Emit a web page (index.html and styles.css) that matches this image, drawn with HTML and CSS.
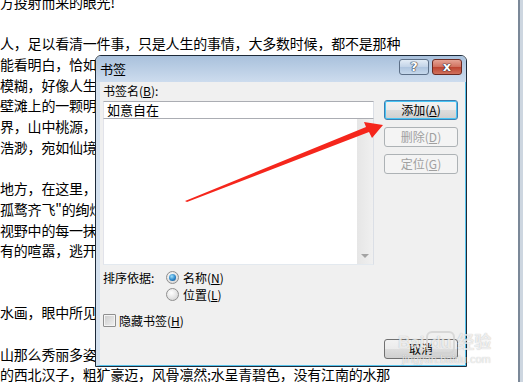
FILE: index.html
```html
<!DOCTYPE html>
<html lang="zh-CN">
<head>
    <meta charset="UTF-8">
    <title>书签</title>
    <link rel="stylesheet" href="styles.css">
</head>
<body>
    <div class="doc">
        <p>方投射而来的眼光!</p>
        <p></p>
        <p>人，足以看清一件事，只是人生的事情，大多数时候，都不是那种</p>
        <p class="under">能看明白，恰如我</p>
        <p class="under">模糊，好像人生中</p>
        <p class="under">壁滩上的一颗明珠</p>
        <p class="under">界，山中桃源，江</p>
        <p class="under">浩渺，宛如仙境</p>
        <p></p>
        <p class="under">地方，在这里，可</p>
        <p class="under">孤鹜齐飞"的绚烂</p>
        <p class="under">视野中的每一抹</p>
        <p class="under">有的喧嚣，逃开城</p>
        <p></p>
        <p></p>
        <p class="under">水画，眼中所见皆</p>
        <p></p>
        <p class="under">山那么秀丽多姿</p>
        <p>的西北汉子，粗犷豪迈，风骨凛然;水呈青碧色，没有江南的水那</p>
    </div>
    <div class="edge"></div>

    <div class="dialog">
        <div class="titlebar">
            <span class="title">书签</span>
            <span class="cap-btn help">?</span>
            <span class="cap-btn close">x</span>
        </div>
        <div class="dialog-body">
            <div class="left-col">
                <div class="label">书签名(<u>B</u>):</div>
                <div class="name-input">如意自在</div>
                <div class="listbox">
                    <div class="scrollbar">
                        <span class="arrow-down"></span>
                    </div>
                </div>
                <div class="sort-row">
                    <span class="label">排序依据:</span>
                    <div class="radios">
                        <div class="option"><span class="radio checked"></span>名称(<u>N</u>)</div>
                        <div class="option"><span class="radio"></span>位置(<u>L</u>)</div>
                    </div>
                </div>
                <div class="option hide-row"><span class="checkbox"></span>隐藏书签(<u>H</u>)</div>
            </div>
            <div class="right-col">
                <div class="btn default">添加(<u>A</u>)</div>
                <div class="btn disabled">删除(<u>D</u>)</div>
                <div class="btn disabled">定位(<u>G</u>)</div>
                <div class="btn cancel">取消</div>
            </div>
        </div>
    </div>

    <div class="watermark">
        <div class="wm-logo">Bai<span class="wm-du">du</span>经验</div>
        <div class="wm-url">jingyan.baidu.com</div>
    </div>

    <svg class="pointer" width="523" height="382" viewBox="0 0 523 382">
        <polygon points="185,201 366,127 364,122 383,125 372,138 369,132 187,202" fill="#f5261c"/>
    </svg>
</body>
</html>
```

FILE: styles.css
```css
body {
    margin: 0;
    width: 523px;
    height: 382px;
    overflow: hidden;
    display: flex;
    background: #fff;
    font-family: "Noto Sans CJK SC", sans-serif;
    color: #000;
}
.doc {
    flex: 1;
    margin-top: -8px;
    font-size: 14px;
    line-height: 20.7px;
    letter-spacing: -0.2px;
    white-space: nowrap;
    overflow: hidden;
}
.doc p {
    margin: 0;
    height: 20.7px;
}
.doc p.under {
    width: 95px;
    overflow: hidden;
}
.edge {
    width: 5px;
    background: linear-gradient(to right, #7b8898 0, #7b8898 2px, #cdd6e0 2px);
}

/* dialog window */
.dialog {
    position: absolute;
    left: 95px;
    top: 55px;
    width: 372px;
    height: 312px;
    box-sizing: border-box;
    border: 1px solid #1d2a39;
    border-radius: 6px 6px 0 0;
    display: flex;
    flex-direction: column;
    overflow: hidden;
    font-size: 12px;
}
.titlebar {
    height: 26px;
    flex: none;
    display: flex;
    align-items: flex-start;
    background: linear-gradient(#a9c1dc, #cddcee);
    padding: 3px 4px 0 4px;
    box-sizing: border-box;
}
.title {
    flex: 1;
    font-size: 13px;
    line-height: 20px;
}
.cap-btn {
    width: 30px;
    height: 16px;
    box-sizing: border-box;
    border: 1px solid #5c6f87;
    border-radius: 3px;
    margin-left: 3px;
    color: #fff;
    font: bold 13px/14px "DejaVu Sans", sans-serif;
    text-align: center;
    text-shadow: 0 0 1px #223, 0 0 1px #223, 0 0 1px #223;
}
.help {
    background: linear-gradient(#e3ecf6, #c2d3e7 50%, #aec4de 51%, #c6d8ec);
}
.close {
    border-color: #6b2a22;
    background: linear-gradient(#e5a394, #d0705e 50%, #bc4330 51%, #d0715c);
}
.dialog-body {
    flex: 1;
    display: flex;
    gap: 10px;
    background: #f0f0f0;
    border-left: 4px solid #d4e1ef;
    border-right: 1px solid #56c3ec;
    border-bottom: 1px solid #56c3ec;
    padding: 2px 6px 6px 3px;
}
.left-col {
    width: 271px;
    display: flex;
    flex-direction: column;
}
.label {
    line-height: 14px;
}
.left-col > .label {
    margin-bottom: 3px;
}
.name-input {
    height: 18px;
    box-sizing: border-box;
    border: 1px solid #abadb3;
    border-color: #abadb3 #dbdfe6 #e3e9ef #e2e3ea;
    background: #fff;
    padding: 0 3px;
    font-size: 13px;
    line-height: 16px;
}
.listbox {
    height: 147px;
    margin-top: -1px;
    box-sizing: border-box;
    border: 1px solid #828790;
    border-color: #abadb3 #dbdfe6 #e3e9ef #e2e3ea;
    background: #fff;
    display: flex;
    justify-content: flex-end;
}
.scrollbar {
    width: 16px;
    background: linear-gradient(to right, #e6e6e6, #f0f0f0);
    display: flex;
    align-items: flex-end;
    justify-content: center;
}
.arrow-down {
    width: 0;
    height: 0;
    border-left: 4px solid transparent;
    border-right: 4px solid transparent;
    border-top: 4px solid #a3a3a3;
    margin-bottom: 6px;
}
.sort-row {
    display: grid;
    grid-template-columns: 63px auto;
    margin-top: 4px;
}
.sort-row > .label {
    line-height: 17px;
}
.option {
    display: flex;
    align-items: center;
    height: 17px;
}
.radio,
.checkbox {
    width: 13px;
    height: 13px;
    box-sizing: border-box;
    margin-right: 4px;
    border: 1px solid #8f8f8f;
    background: radial-gradient(circle at 40% 35%, #fff, #dcdcdc 70%, #c9c9c9);
    display: flex;
    align-items: center;
    justify-content: center;
}
.radio {
    border-radius: 50%;
}
.radio.checked::after {
    content: "";
    width: 7px;
    height: 7px;
    border-radius: 50%;
    background: radial-gradient(circle at 40% 35%, #9fe0fb, #2b86c9 55%, #14437a);
}
.checkbox {
    border-radius: 1px;
    margin-right: 3px;
    background: linear-gradient(135deg, #cbcbcb, #f2f2f2);
    box-shadow: inset 0 0 0 1px #f4f4f4;
}
.hide-row {
    margin-top: 9px;
}
.right-col {
    width: 74px;
    display: flex;
    flex-direction: column;
    gap: 7px;
    padding-top: 16px;
}
.btn {
    height: 20px;
    box-sizing: border-box;
    border: 1px solid #707070;
    border-radius: 3px;
    background: linear-gradient(#f2f2f2, #ebebeb 50%, #dddddd 51%, #cfcfcf);
    text-align: center;
    line-height: 18px;
}
.btn.default {
    border-color: #3c7fb1;
    box-shadow: inset 0 0 0 1px #48c4f4;
}
.btn.disabled {
    border-color: #adb2b5;
    background: #f4f4f4;
    color: #a0a0a0;
}
.btn.cancel {
    margin-top: auto;
}

/* watermark */
.watermark {
    position: absolute;
    left: 398px;
    top: 333px;
    color: rgba(255, 255, 255, 0.75);
    text-shadow: 0 0 1px rgba(0, 0, 0, 0.3);
    font-family: "Liberation Sans", "Noto Sans CJK SC", sans-serif;
}
.wm-logo {
    font-size: 17px;
    font-weight: bold;
    line-height: 20px;
}
.wm-du {
    border: 2px solid rgba(210, 210, 210, 0.8);
    border-radius: 6px;
    padding: 0 2px;
    margin: 0 2px;
}
.wm-url {
    font-size: 11px;
    line-height: 12px;
    margin-left: 4px;
}
.pointer {
    position: absolute;
    left: 0;
    top: 0;
    pointer-events: none;
}
```
